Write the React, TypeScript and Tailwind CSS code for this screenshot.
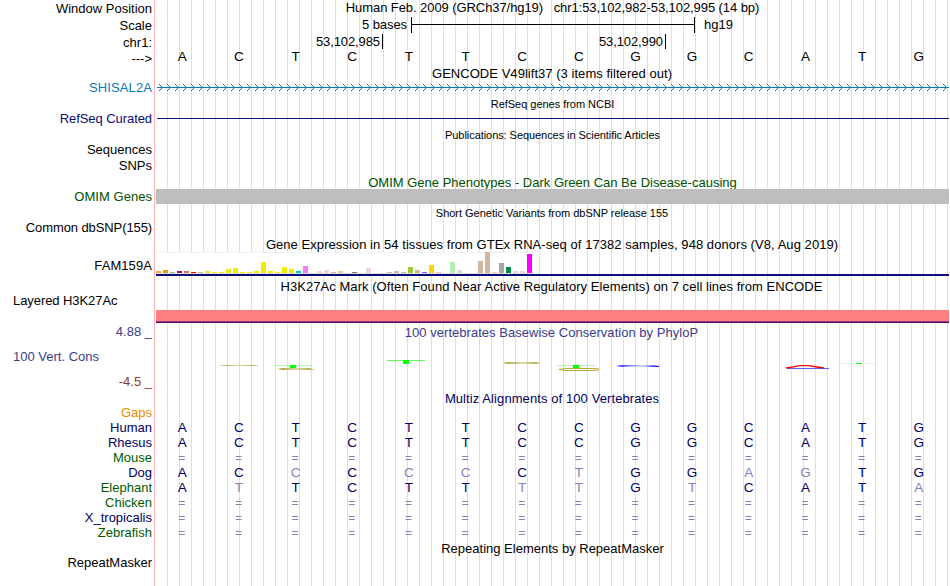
import React from "react";

type Label = { text: string; height: string; tone?: string; left?: boolean };

const labels: Label[] = [
  { text: "Window Position", height: "h-[17px]" },
  { text: "Scale", height: "h-[17px]" },
  { text: "chr1:", height: "h-[16px]" },
  { text: "--->", height: "h-[29px]" },
  { text: "SHISAL2A", height: "h-[31px]", tone: "text-[#0c78b8] tracking-[0.1px]" },
  { text: "RefSeq Curated", height: "h-[31px]", tone: "text-[#0c0c78] tracking-[-0.07px]" },
  { text: "Sequences", height: "h-[16px]" },
  { text: "SNPs", height: "h-[31px]" },
  { text: "OMIM Genes", height: "h-[31px]", tone: "text-[#005000] tracking-[0.04px]" },
  { text: "Common dbSNP(155)", height: "h-[38px]", tone: "tracking-[-0.1px]" },
  { text: "FAM159A", height: "h-[35px]", tone: "tracking-[0.08px]" },
  { text: "Layered H3K27Ac", height: "h-[31px]", tone: "tracking-[-0.07px]", left: true },
  { text: "4.88 _", height: "h-[25px]", tone: "text-[#3c3c8c]" },
  { text: "100 Vert. Cons", height: "h-[25px]", tone: "text-[#3c3c8c]", left: true },
  { text: "-4.5 _", height: "h-[31px]", tone: "text-[#8c3c3c]" },
  { text: "Gaps", height: "h-[15px]", tone: "text-[#e68a00]" },
  { text: "Human", height: "h-[15px]", tone: "text-[#000064]" },
  { text: "Rhesus", height: "h-[15px]", tone: "text-[#000064]" },
  { text: "Mouse", height: "h-[15px]", tone: "text-[#005a00]" },
  { text: "Dog", height: "h-[15px]", tone: "text-[#000064]" },
  { text: "Elephant", height: "h-[15px]", tone: "text-[#005a00]" },
  { text: "Chicken", height: "h-[15px]", tone: "text-[#005a00]" },
  { text: "X_tropicalis", height: "h-[15px]", tone: "text-[#000064]" },
  { text: "Zebrafish", height: "h-[30px]", tone: "text-[#005a00]" },
  { text: "RepeatMasker", height: "h-[15px]" },
];

// Lower-case letters are bases that differ from the human sequence.
const alignments = [
  "ACTCTTCCGGCATG",
  "ACTCTTCCGGCATG",
  "==============",
  "ACcCccCtGGagTG",
  "AtTCTTttGtCATa",
  "==============",
  "==============",
  "==============",
];

// One bar per GTEx tissue: [colour, height in pixels].
const tissues: [string, number][] = [
  ["#ffa54f", 2], ["#ee9a00", 3], ["#8fbc8f", 1], ["#8b1c62", 2], ["#ee6a50", 2],
  ["#ff0000", 1], ["#cdb79e", 1], ["#eeee00", 2], ["#eeee00", 1], ["#eeee00", 1],
  ["#eeee00", 4], ["#eeee00", 5], ["#eeee00", 1], ["#eeee00", 1], ["#eeee00", 2],
  ["#eeee00", 11], ["#eeee00", 2], ["#eeee00", 1], ["#eeee00", 6], ["#eeee00", 4],
  ["#00cdcd", 2], ["#ee82ee", 7], ["#9ac0cd", 0], ["#eed5d2", 2], ["#eed5d2", 3],
  ["#cdb79e", 1], ["#eec591", 2], ["#8b7355", 0], ["#8b7355", 1], ["#cdaa7d", 0],
  ["#eed5d2", 5], ["#b452cd", 0], ["#7a378b", 0], ["#cdb79e", 1], ["#cdb79e", 2],
  ["#cdb79e", 1], ["#9acd32", 6], ["#cdb79e", 3], ["#7a67ee", 1], ["#ffd700", 8],
  ["#ffb6c1", 1], ["#cd9b1d", 0], ["#b4eeb4", 11], ["#d9d9d9", 3], ["#3a5fcd", 0],
  ["#1e90ff", 0], ["#cdb79e", 12], ["#cdb79e", 21], ["#ffd39b", 1], ["#a6a6a6", 10],
  ["#008b45", 6], ["#eed5d2", 2], ["#eed5d2", 2], ["#ff00ff", 19],
];

function Title({ children, className = "" }: { children: React.ReactNode; className?: string }) {
  return <div className={`h-[15px] text-center whitespace-pre ${className}`}>{children}</div>;
}

function SmallTitle({ children, className = "" }: { children: React.ReactNode; className?: string }) {
  return <div className={`h-[13px] text-center text-[11px] leading-[13px] whitespace-pre ${className}`}>{children}</div>;
}

function baseStyle(base: string) {
  if (base === "=") return "pt-px pr-px text-[12px] text-[#8282b4]";
  return /[a-z]/.test(base) ? "text-[13.5px] text-[#8282b4]" : "text-[13.5px]";
}

function Bases({ sequence }: { sequence: string }) {
  return (
    <div className="-ml-0.5 grid h-[15px] w-[793px] grid-cols-14 text-center leading-[15px]">
      {sequence.split("").map((base, i) => (
        <span key={i} className={baseStyle(base)}>
          {base.toUpperCase()}
        </span>
      ))}
    </div>
  );
}

function GeneLine() {
  return (
    <svg className="mt-0.5 block h-[9px] w-[793px]" viewBox="0 0 793 9" shapeRendering="crispEdges">
      <defs>
        <pattern id="strand" x="1" y="0" width="8" height="9" patternUnits="userSpaceOnUse">
          <path
            d="M2 1h1v1h-1z M3 2h1v1h-1z M4 3h1v1h-1z M5 4h1v1h-1z M4 5h1v1h-1z M3 6h1v1h-1z M2 7h1v1h-1z"
            fill="#0c78b8"
          />
        </pattern>
      </defs>
      <rect x="1" y="0" width="792" height="9" fill="url(#strand)" />
      <rect x="1" y="4" width="792" height="1" fill="#0c78b8" />
    </svg>
  );
}

function Conservation() {
  return (
    <svg className="block h-[51px] w-[793px]" viewBox="156 340 793 51">
      <defs>
        <linearGradient id="olive">
          <stop offset="0" stopColor="#a8a020" stopOpacity="0.5" />
          <stop offset="0.15" stopColor="#a8a020" />
          <stop offset="0.5" stopColor="#c8c480" stopOpacity="0.8" />
          <stop offset="0.85" stopColor="#a8a020" />
          <stop offset="1" stopColor="#a8a020" stopOpacity="0.4" />
        </linearGradient>
        <linearGradient id="blue">
          <stop offset="0" stopColor="#2020ff" />
          <stop offset="0.3" stopColor="#7070ff" />
          <stop offset="0.7" stopColor="#9090ff" />
          <stop offset="1" stopColor="#0000ff" />
        </linearGradient>
      </defs>
      <rect x="220" y="365" width="38" height="1" fill="url(#olive)" opacity="0.75" />

      <rect x="274" y="365" width="38" height="1" fill="#b4f5b4" />
      <rect x="290" y="365" width="6" height="3" fill="#00ff00" />
      <path d="M277 369 L281 368 H309 L316 369.5 L309 370 H281 Z" fill="url(#olive)" opacity="0.85" />

      <rect x="387" y="360" width="38" height="1" fill="#60fa60" />
      <rect x="403" y="360" width="6" height="4" fill="#00ff00" />

      <path d="M502.5 363 L505 362 H537 L542 363.3 L537 364 H505 Z" fill="url(#olive)" opacity="0.8" />

      <rect x="557" y="365" width="38" height="1" fill="#b4f5b4" />
      <rect x="573" y="365" width="6" height="3" fill="#00ff00" />
      <path d="M599 368.9 L592 368.5 H566 L559 369.5 L566 370.5 H592 L599 370" fill="none" stroke="#aaa020" strokeWidth="0.9" />

      <path d="M616 366 L622 365 H628 L641 365.5 L653 365.3 L659 366 V367 H652 L641 366.3 L628 366.5 L622 367 Z" fill="url(#blue)" />

      <path d="M787 368.5 H829" stroke="#6060ff" strokeWidth="1" />
      <path d="M786 368 L793 366.8 L800 365.7 H809 L817 367 L824 368" fill="none" stroke="#ff0000" strokeWidth="1.3" />

      <rect x="839" y="363" width="38" height="1" fill="#e0f5e4" />
      <rect x="856" y="363" width="6" height="1" fill="#00f000" />
    </svg>
  );
}

export default function App() {
  return (
    <main className="flex h-[586px] w-[950px] overflow-hidden bg-white font-['Liberation_Sans',Arial,sans-serif] text-[13px] leading-[15px] text-black">
      <aside className="w-[154px] shrink-0 pt-px">
        {labels.map(({ text, height, tone = "", left }) => (
          <div key={text} className={`whitespace-pre ${height} ${tone} ${left ? "pl-[13px] text-left" : "pr-[2px] text-right"}`}>
            {text}
          </div>
        ))}
      </aside>
      <div className="mr-px w-px shrink-0 bg-[#ffb4b4]" />

      <section className="w-[793px] shrink-0 bg-[repeating-linear-gradient(to_right,transparent_0,transparent_11px,#dcdcf8_11px,#dcdcf8_12px)]">
        <Title className="tracking-[-0.075px]">{"Human Feb. 2009 (GRCh37/hg19)   chr1:53,102,982-53,102,995 (14 bp)"}</Title>

        <div className="mt-0.5 flex h-4">
          <div className="w-[255px] pr-1 text-right tracking-[-0.07px]">5 bases</div>
          <div className="flex w-[284px] items-center border-x border-black">
            <div className="mb-px h-px w-full bg-black" />
          </div>
          <div className="ml-[9px]">hg19</div>
        </div>

        <div className="flex h-4 pt-px">
          <div className="w-[227px] border-r border-black pt-px pr-0.5 text-right leading-[14px] tracking-[-0.1px]">53,102,985</div>
          <div className="w-[283px] border-r border-black pt-px pr-0.5 text-right leading-[14px] tracking-[-0.1px]">53,102,990</div>
        </div>

        <Bases sequence="ACTCTTCCGGCATG" />

        <Title className="mt-0.5 pr-px tracking-[0.04px]">GENCODE V49lift37 (3 items filtered out)</Title>
        <GeneLine />

        <SmallTitle className="mt-1.5 tracking-[-0.03px]">RefSeq genes from NCBI</SmallTitle>
        <div className="mt-[7px] ml-px h-px bg-[#0c0c78]" />

        <SmallTitle className="mt-2.5 tracking-[-0.06px]">Publications: Sequences in Scientific Articles</SmallTitle>

        <div className="mt-[33px] h-[14px] overflow-hidden">
          <Title className="text-[#005000]">OMIM Gene Phenotypes - Dark Green Can Be Disease-causing</Title>
        </div>
        <div className="h-[15px] bg-[#bebebe]" />

        <SmallTitle className="mt-[3px] pr-px tracking-[-0.02px]">Short Genetic Variants from dbSNP release 155</SmallTitle>

        <Title className="mt-[17px] pr-px tracking-[0.055px]">Gene Expression in 54 tissues from GTEx RNA-seq of 17382 samples, 948 donors (V8, Aug 2019)</Title>
        <div className="flex h-[22px] w-[378px] items-end gap-[2px] bg-[linear-gradient(to_bottom,#f2f2f2_1px,white_1px,white_21px,#e0e0e0_21px)] pb-px">
          {tissues.map(([color, height], i) => (
            <div key={i} className="w-[5px] shrink-0" style={{ height, backgroundColor: color }} />
          ))}
        </div>
        <div className="h-0.5 bg-[#0c0c78]" />

        <Title className="mt-[3px] pr-0.5 tracking-[0.05px]">H3K27Ac Mark (Often Found Near Active Regulatory Elements) on 7 cell lines from ENCODE</Title>
        <div className="mt-4 h-[13px] border-b border-[#5a0a5f] bg-[linear-gradient(to_bottom,#ff8080_11px,#853c78_11px)]" />

        <Title className="mt-0.5 pr-0.5 tracking-[0.03px] text-[#3c3c8c]">100 vertebrates Basewise Conservation by PhyloP</Title>
        <Conservation />

        <Title className="pr-px tracking-[0.09px] text-[#000064]">Multiz Alignments of 100 Vertebrates</Title>
        <div className="mt-3.5 text-[#000064]">
          {alignments.map((sequence, i) => (
            <Bases key={i} sequence={sequence} />
          ))}
        </div>

        <Title className="mt-px">Repeating Elements by RepeatMasker</Title>
      </section>
    </main>
  );
}
